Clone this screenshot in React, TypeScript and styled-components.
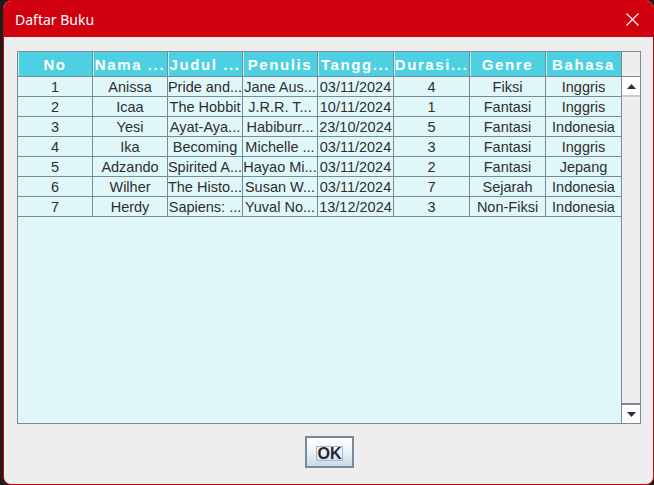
import React from "react";
import styled, { createGlobalStyle } from "styled-components";

const GlobalStyle = createGlobalStyle`
  html, body {
    margin: 0;
    padding: 0;
    background: #1c1c1c;
    overflow: hidden;
  }
`;

const columns = [
  { title: "No", width: 75 },
  { title: "Nama ...", width: 75 },
  { title: "Judul ...", width: 75 },
  { title: "Penulis", width: 75 },
  { title: "Tangg...", width: 76 },
  { title: "Durasi...", width: 76 },
  { title: "Genre", width: 76 },
  { title: "Bahasa", width: 75 },
];

const rows = [
  ["1", "Anissa", "Pride and...", "Jane Aus...", "03/11/2024", "4", "Fiksi", "Inggris"],
  ["2", "Icaa", "The Hobbit", "J.R.R. T...", "10/11/2024", "1", "Fantasi", "Inggris"],
  ["3", "Yesi", "Ayat-Aya...", "Habiburr...", "23/10/2024", "5", "Fantasi", "Indonesia"],
  ["4", "Ika", "Becoming", "Michelle ...", "03/11/2024", "3", "Fantasi", "Inggris"],
  ["5", "Adzando", "Spirited A...", "Hayao Mi...", "03/11/2024", "2", "Fantasi", "Jepang"],
  ["6", "Wilher", "The Histo...", "Susan W...", "03/11/2024", "7", "Sejarah", "Indonesia"],
  ["7", "Herdy", "Sapiens: ...", "Yuval No...", "13/12/2024", "3", "Non-Fiksi", "Indonesia"],
];

const gridCols = columns.map((c) => `${c.width}px`).join(" ");

const Screen = styled.div`
  width: 654px;
  height: 485px;
  padding-left: 3px;
  box-sizing: border-box;
`;

const Window = styled.div`
  width: 651px;
  height: 485px;
  box-sizing: border-box;
  border: 1px solid #d0000f;
  border-radius: 8px;
  background: #eeeeee;
  display: flex;
  flex-direction: column;
  overflow: hidden;
`;

const TitleBar = styled.div`
  height: 36px;
  background: #d0000f;
  display: flex;
  align-items: center;
  justify-content: space-between;
  padding: 0 14px 0 11px;
  color: #ffffff;
  font-family: "Noto Sans", "Open Sans", sans-serif;
  font-size: 14px;
  flex-shrink: 0;
`;

const CloseButton = styled.svg`
  width: 13px;
  height: 13px;
`;

const Content = styled.div`
  flex: 1;
  display: flex;
  flex-direction: column;
  align-items: center;
  padding: 14px 12px 0 13px;
`;

const ScrollPane = styled.div`
  width: 624px;
  height: 373px;
  box-sizing: border-box;
  border: 1px solid #7a8a99;
  display: grid;
  grid-template-columns: 603px 19px;
  background: #e0f7fa;
`;

const Viewport = styled.div`
  display: flex;
  flex-direction: column;
`;

const HeaderRow = styled.div`
  display: grid;
  grid-template-columns: ${gridCols};
  height: 25px;
  background: #4dd0e1;
  border-bottom: 1px solid #7a8a99;
  box-sizing: border-box;
`;

const HeaderCell = styled.div<{ $last?: boolean }>`
  display: flex;
  align-items: center;
  justify-content: center;
  color: #ffffff;
  font-family: "Liberation Sans", Arial, sans-serif;
  font-weight: bold;
  font-size: 15px;
  letter-spacing: 1.6px;
  white-space: nowrap;
  overflow: hidden;
  box-sizing: border-box;
  border-right: ${(p) => (p.$last ? "none" : "1px solid #7a8a99")};
  box-shadow: inset 1px 0 0 #c6eff5;
`;

const BodyRow = styled.div`
  display: grid;
  grid-template-columns: ${gridCols};
  height: 20px;
  border-bottom: 1px solid #7a8a99;
  box-sizing: border-box;
`;

const Cell = styled.div<{ $last?: boolean }>`
  display: flex;
  align-items: center;
  justify-content: center;
  color: #2e2e2e;
  font-family: "Liberation Sans", Arial, sans-serif;
  font-size: 14.5px;
  white-space: nowrap;
  overflow: hidden;
  box-sizing: border-box;
  border-right: ${(p) => (p.$last ? "none" : "1px solid #7a8a99")};
`;

const ScrollColumn = styled.div`
  display: flex;
  flex-direction: column;
  background: #eeeeee;
  border-left: 1px solid #7a8a99;
`;

const Corner = styled.div`
  height: 25px;
  flex-shrink: 0;
  border-bottom: 1px solid #7a8a99;
  box-sizing: border-box;
  background: #eeeeee;
`;

const ArrowButton = styled.div<{ $down?: boolean }>`
  height: 20px;
  flex-shrink: 0;
  display: flex;
  align-items: center;
  justify-content: center;
  background: #ffffff;
  box-sizing: border-box;
  border-top: ${(p) => (p.$down ? "2px solid #7a8a99" : "1px solid #ffffff")};
  border-bottom: ${(p) => (p.$down ? "none" : "2px solid #b8cfe5")};
`;

const Track = styled.div`
  flex: 1;
  background: #eeeeee;
`;

const Footer = styled.div`
  flex: 1;
  display: flex;
  align-items: flex-start;
  justify-content: center;
  padding-top: 12px;
`;

const OkButton = styled.button`
  width: 49px;
  height: 32px;
  box-sizing: border-box;
  border: 2px solid #7a8a99;
  background: linear-gradient(#ffffff 0%, #f2f6fa 40%, #c9d9ea 100%);
  display: flex;
  align-items: center;
  justify-content: center;
  padding: 0;
  cursor: pointer;
`;

const OkLabel = styled.span`
  font-family: "Liberation Sans", Arial, sans-serif;
  font-weight: bold;
  font-size: 16px;
  color: #1f2733;
  border: 1px solid #a3b8cc;
  width: 25px;
  height: 13px;
  line-height: 13px;
  box-sizing: content-box;
  display: flex;
  align-items: center;
  justify-content: center;
  margin-top: 2px;
  margin-left: 1px;
  overflow: visible;
`;

const Triangle = ({ down }: { down?: boolean }) => (
  <svg width="9" height="5" viewBox="0 0 9 5">
    {down ? <polygon points="0,0 9,0 4.5,5" fill="#333" /> : <polygon points="0,5 9,5 4.5,0" fill="#333" />}
  </svg>
);

const App = () => {
  return (
    <Screen>
      <GlobalStyle />
      <Window>
        <TitleBar>
          <span>Daftar Buku</span>
          <CloseButton viewBox="0 0 13 13">
            <path d="M0.5 0.5 L12.5 12.5 M12.5 0.5 L0.5 12.5" stroke="#ffffff" strokeWidth="1.1" />
          </CloseButton>
        </TitleBar>
        <Content>
          <ScrollPane>
            <Viewport>
              <HeaderRow>
                {columns.map((c, i) => (
                  <HeaderCell key={c.title} $last={i === columns.length - 1}>
                    {c.title}
                  </HeaderCell>
                ))}
              </HeaderRow>
              {rows.map((r) => (
                <BodyRow key={r[0]}>
                  {r.map((v, i) => (
                    <Cell key={i} $last={i === r.length - 1}>
                      {v}
                    </Cell>
                  ))}
                </BodyRow>
              ))}
            </Viewport>
            <ScrollColumn>
              <Corner />
              <ArrowButton>
                <Triangle />
              </ArrowButton>
              <Track />
              <ArrowButton $down>
                <Triangle down />
              </ArrowButton>
            </ScrollColumn>
          </ScrollPane>
          <Footer>
            <OkButton>
              <OkLabel>OK</OkLabel>
            </OkButton>
          </Footer>
        </Content>
      </Window>
    </Screen>
  );
};

export default App;
